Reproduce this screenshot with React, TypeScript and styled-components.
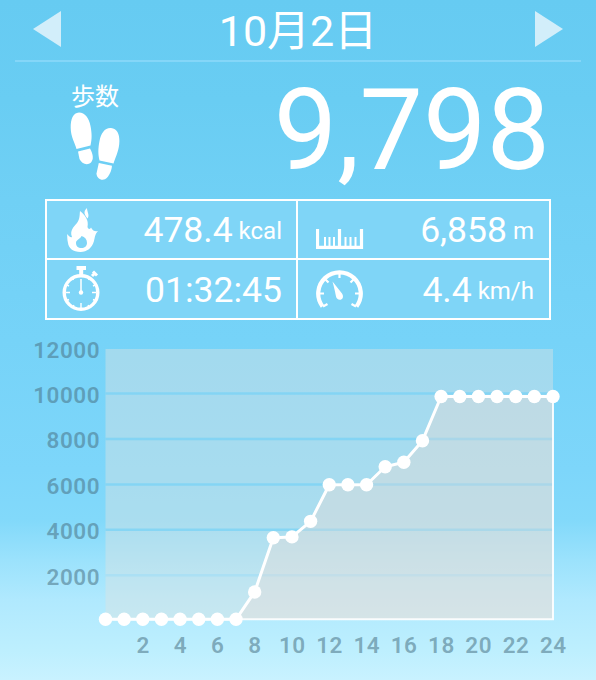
import React from "react";
import styled, { createGlobalStyle } from "styled-components";

const GlobalStyle = createGlobalStyle`
  * { box-sizing: border-box; }
  body { margin: 0; }
`;

const Screen = styled.main`
  width: 596px;
  height: 680px;
  overflow: hidden;
  display: flex;
  flex-direction: column;
  color: #fff;
  font-family: Roboto, "Noto Sans CJK JP", sans-serif;
  background: linear-gradient(
    #66cbf2 0,
    #69cdf3 100px,
    #70d0f5 200px,
    #76d3f8 340px,
    #7dd6fa 470px,
    #82d9fa 520px,
    #9be2fc 560px,
    #b0e9fe 600px,
    #bdeffe 650px,
    #c9f2ff 680px
  );
`;

const Header = styled.header`
  height: 62px;
  margin: 0 15px;
  padding: 0 18px 2px;
  display: flex;
  align-items: center;
  justify-content: space-between;
  border-bottom: 2px solid #84d6f8;
`;

const DateTitle = styled.h1`
  margin: 0;
  padding-top: 3px;
  font-size: 43px;
  line-height: 60px;
  font-weight: 400;
`;

const ArrowButton = styled.button`
  padding: 0;
  border: 0;
  background: none;
  display: flex;
  svg { display: block; }
`;

const Summary = styled.section`
  height: 137px;
  padding: 0 46px 0 70px;
  display: flex;
  justify-content: space-between;
`;

const StepsLabel = styled.div`
  padding-top: 20px;
  font-size: 24px;
  line-height: 30px;
  text-indent: 1px;
  svg { display: block; }
`;

const StepCount = styled.div`
  padding-top: 2px;
  font-size: 113px;
  line-height: 134px;
`;

const Stats = styled.section`
  width: 506px;
  height: 121px;
  margin-left: 45px;
  display: grid;
  grid-template-columns: 249px 251px;
  grid-template-rows: 57px 58px;
  gap: 2px;
  padding: 2px;
  background: #fff;
`;

const Stat = styled.div<{ $inset: number; $end?: number }>`
  display: flex;
  align-items: center;
  justify-content: space-between;
  padding: 0 ${(p) => p.$end ?? 15}px 0 ${(p) => p.$inset}px;
  background: #7fd5f7;
  svg { display: block; }
`;

const Value = styled.div`
  display: flex;
  align-items: baseline;
  gap: 6px;
  padding-top: 1px;
  font-size: 35.5px;
  line-height: 54px;
  white-space: nowrap;
`;

const Unit = styled.span`
  font-size: 24px;
  line-height: 30px;
  transform: translateY(-3px);
`;

const ChartSvg = styled.svg`
  display: block;
  text {
    font-family: Roboto, sans-serif;
    font-size: 22.5px;
    font-weight: 600;
    letter-spacing: 0.5px;
    fill: rgba(72, 112, 130, 0.54);
  }
`;

const Arrow = ({ flip = false }: { flip?: boolean }) => (
  <ArrowButton aria-label={flip ? "next" : "previous"}>
    <svg width="28" height="36" viewBox="0 0 28 36">
      <path d={flip ? "M0 0 28 18 0 36Z" : "M28 0 0 18 28 36Z"} fill="#d2eefa" />
    </svg>
  </ArrowButton>
);

const Footprints = () => (
  <svg width="50" height="70" viewBox="0 0 50 70" fill="#fff">
    <path d="M9 .5C15 .5 19 6 20.500 14C22 22 22 27 20.500 33.500L6.500 37C5 31 .8 25 .7 16C.6 7 3 1 9 .5Z" />
    <path d="M8 39.500 20 36.500C23 42 24 47 21 50.500C17 54 11.500 51.500 9.500 47Z" />
    <path d="M41 16C47 16.500 49.500 22 49.400 29C49.300 38 46 44 43.500 51.500L29.500 48.500C28 42 28 37 29.500 29C31 21 35 15.500 41 16Z" />
    <path d="M28.800 51 42 53.800C41.500 59 39 65 35 67.300C31 69 26.500 66 26.500 61.500Z" />
  </svg>
);

const Flame = () => (
  <svg width="50" height="46" viewBox="0 0 50 46">
    <path
      fill="#fff"
      fillRule="evenodd"
      d="M19 4C24 8 28 13 26.500 20C27.500 23 29.500 22 30 20.500C32 24.500 34.500 24.500 37 24C34 27 34 30 33 34C31 41 26 45 19.500 45C12 45 7.500 41 7 36C6 32 6.500 30 6 27C8 29 9.500 31 11 30C8.500 24 12.500 20 16 16C19 12 18.500 8 19 4ZM20.500 29C24 30 26 32.500 26 36C26 39 23.500 41 20.500 41C17 41 15 39 15 36C15 32.500 19 32.500 20.500 29Z"
    />
    <path fill="#fff" d="M26 1C21.500 5 24 8 26.500 11.500C29 8 26 5 26 1Z" />
  </svg>
);

const Stopwatch = () => (
  <svg width="38" height="46" viewBox="0 0 38 46" fill="none" stroke="#fff">
    <circle cx="19" cy="26.500" r="16.800" strokeWidth="3.400" />
    <path d="M14.500 2H24M19.200 2V9" strokeWidth="4" />
    <path d="m30 10 3-3m-2-1.500L35 9.500" strokeWidth="3" />
    <path d="M19 26V13" strokeWidth="1.500" />
    <circle cx="19" cy="26.500" r="2.200" fill="#fff" stroke="none" />
    <path
      d="M19 37v5M4 26.500h4M30 26.500h4M26.500 14l1.500-2.500M11.500 14 10 11.500M31 20l2-1M7 20l-2-1M31 33.500l2 1M7 33.500l-2 1M26 39l1.500 2.500M12 39l-1.500 2.500"
      strokeWidth="1.400"
    />
  </svg>
);

const Ruler = () => (
  <svg width="48" height="42" viewBox="0 0 48 42" fill="none" stroke="#fff">
    <path d="M1.500 20V38.300H45.500V20M23.500 20V38" strokeWidth="3.200" />
    <path d="M9 28v10M13.500 28v10M18 28v10M29.500 28v10M34.500 28v10M39.500 28v10" strokeWidth="2" />
  </svg>
);

const Gauge = () => (
  <svg width="48" height="40" viewBox="0 0 48 40" fill="none" stroke="#fff">
    <path d="M6.500 37.500A21.300 21.300 0 1 1 40.500 37.500" strokeWidth="4.200" />
    <path
      d="M23.500 4v5M3 24.500h5M39 24.500h5M9 10l3.500 3.500M38 10l-3.500 3.500M7 37.500l4.500-2.500M40 37.500l-4.500-2.500"
      strokeWidth="2.200"
    />
    <path d="M16.500 12.500 26 24.500C29 29 24.500 33 21 29.500C19.500 27.500 20 25 16.500 12.500Z" fill="#fff" stroke="none" />
  </svg>
);

const TOP = 320;
const LEFT = 105.5;
const RIGHT = 553;
const BASE = 619.3 - TOP;
const HOUR = (RIGHT - LEFT) / 24;
const PER_STEP = 45.4 / 2000;

const steps = [
  0, 0, 0, 0, 0, 0, 0, 0, 1203, 3585, 3625, 4308, 5917, 5917, 5917, 6710, 6908,
  7855, 9798, 9798, 9798, 9798, 9798, 9798, 9798,
];
const yTicks = [12000, 10000, 8000, 6000, 4000, 2000];
const xTicks = [2, 4, 6, 8, 10, 12, 14, 16, 18, 20, 22, 24];
const gridY = (n: number) => 621 - TOP - n * PER_STEP;
const points = steps.map((n, i) => [LEFT + i * HOUR, BASE - n * PER_STEP * 1.0016]);
const line = points.map((p) => p.join(" ")).join("L");

const StepsChart = () => (
  <ChartSvg width="596" height="360" viewBox="0 0 596 360">
    <rect x={LEFT} y="29" width={RIGHT - LEFT} height={BASE - 29} fill="rgba(222,227,225,.43)" />
    {yTicks.map((n) => (
      <g key={n}>
        {n < 12000 && (
          <path
            d={`M${LEFT} ${gridY(n) - 0.4}H${RIGHT}`}
            stroke={n === 2000 ? "#9adcf8" : "#72d1f6"}
            strokeOpacity={n === 2000 ? 0.5 : 0.65}
            strokeWidth="2.500"
          />
        )}
        <text x="100" y={gridY(n) + 9} textAnchor="end">{n}</text>
      </g>
    ))}
    <path d={`M${LEFT} ${BASE}L${line}L${RIGHT} ${BASE}Z`} fill="rgba(240,220,212,.34)" />
    <path d={`M${LEFT} ${BASE}H${RIGHT}V${points[24][1]}`} fill="none" stroke="#fff" strokeOpacity=".9" strokeWidth="2" />
    <path d={`M${line}`} fill="none" stroke="#fff" strokeWidth="3" strokeLinejoin="round" />
    {points.map(([x, y], i) => (
      <circle key={i} cx={x} cy={y} r="6.700" fill="#fff" />
    ))}
    {xTicks.map((n) => (
      <text key={n} x={LEFT + n * HOUR + 0.3} y="333" textAnchor="middle">{n}</text>
    ))}
  </ChartSvg>
);

export default function App() {
  return (
    <>
      <GlobalStyle />
      <Screen>
        <Header>
          <Arrow />
          <DateTitle>10月2日</DateTitle>
          <Arrow flip />
        </Header>
        <Summary>
          <StepsLabel>
            歩数
            <Footprints />
          </StepsLabel>
          <StepCount>9,798</StepCount>
        </Summary>
        <Stats>
          <Stat $inset={14} $end={14}>
            <Flame />
            <Value>478.4<Unit>kcal</Unit></Value>
          </Stat>
          <Stat $inset={18}>
            <Ruler />
            <Value>6,858<Unit>m</Unit></Value>
          </Stat>
          <Stat $inset={15} $end={14}>
            <Stopwatch />
            <Value>01:32:45</Value>
          </Stat>
          <Stat $inset={18}>
            <Gauge />
            <Value>4.4<Unit>km/h</Unit></Value>
          </Stat>
        </Stats>
        <StepsChart />
      </Screen>
    </>
  );
}
